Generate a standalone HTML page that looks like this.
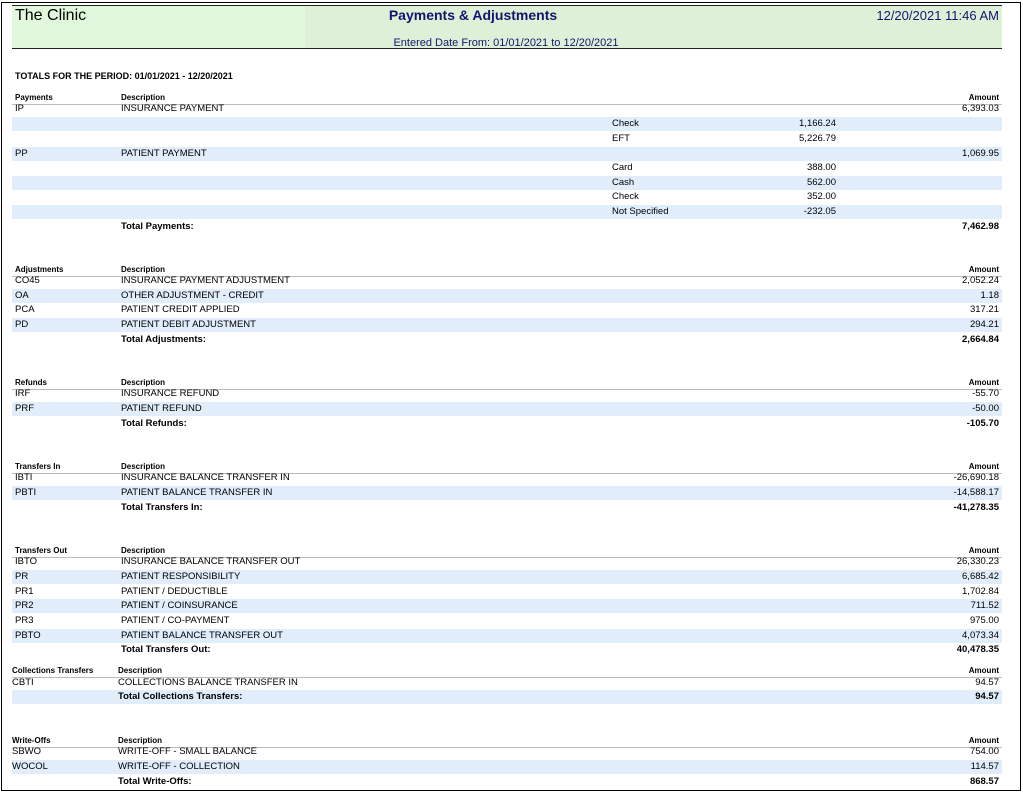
<!DOCTYPE html>
<html><head><meta charset="utf-8"><style>
*{margin:0;padding:0;box-sizing:border-box}
body{width:1023px;height:792px;background:#fff;font-family:"Liberation Sans",Arial,sans-serif;color:#000;position:relative;overflow:hidden}
.frame{position:absolute;left:1px;top:2px;width:1020px;height:789px;border:1px solid #000}
.hd{position:absolute;left:12px;top:5px;width:990px;height:44px;background:#dff0d8;border-top:1px solid #222;border-bottom:1px solid #222}
.hdl{position:absolute;left:0;top:0;width:293px;height:42px;background:#e2f8dc}
.r{position:absolute;left:12px;width:990px;height:14px;font-size:9.5px;line-height:14px;white-space:nowrap}
.b{background:#e1edfb}
.r span{position:absolute;top:0}
.c{left:3px}.d{left:109px}.s{left:600px}
.sa{right:166px;text-align:right}.a{right:3px;text-align:right}
.h{font-size:8px;font-weight:bold;border-bottom:1px solid #bbb}
.t{font-weight:bold}
.cc .c{left:0}.cc .d{left:106px}
</style></head><body>
<div class="frame"></div>
<div class="hd"><div class="hdl"></div></div>
<div style="position:absolute;left:15px;top:7px;font-size:16px">The Clinic</div>
<div style="position:absolute;left:0;width:946px;text-align:center;top:7px;font-size:14px;font-weight:bold;color:#14146e">Payments &amp; Adjustments</div>
<div style="position:absolute;left:0;width:1012px;text-align:center;top:37px;font-size:11px;color:#14146e">Entered Date From: 01/01/2021 to 12/20/2021</div>
<div style="position:absolute;right:24px;top:8px;font-size:13px;color:#14146e">12/20/2021 11:46 AM</div>
<div style="position:absolute;left:15px;top:71px;font-size:9px;font-weight:bold">TOTALS FOR THE PERIOD: 01/01/2021 - 12/20/2021</div>

<div class="r h" style="top:91px"><span class="c">Payments</span><span class="d">Description</span><span class="a">Amount</span></div>
<div class="r" style="top:102px"><span class="c">IP</span><span class="d">INSURANCE PAYMENT</span><span class="a">6,393.03</span></div>
<div class="r b" style="top:117px"><span class="s">Check</span><span class="sa">1,166.24</span></div>
<div class="r" style="top:132px"><span class="s">EFT</span><span class="sa">5,226.79</span></div>
<div class="r b" style="top:147px"><span class="c">PP</span><span class="d">PATIENT PAYMENT</span><span class="a">1,069.95</span></div>
<div class="r" style="top:161px"><span class="s">Card</span><span class="sa">388.00</span></div>
<div class="r b" style="top:176px"><span class="s">Cash</span><span class="sa">562.00</span></div>
<div class="r" style="top:190px"><span class="s">Check</span><span class="sa">352.00</span></div>
<div class="r b" style="top:205px"><span class="s">Not Specified</span><span class="sa">-232.05</span></div>
<div class="r t" style="top:220px"><span class="d">Total Payments:</span><span class="a">7,462.98</span></div>

<div class="r h" style="top:263px"><span class="c">Adjustments</span><span class="d">Description</span><span class="a">Amount</span></div>
<div class="r" style="top:274px"><span class="c">CO45</span><span class="d">INSURANCE PAYMENT ADJUSTMENT</span><span class="a">2,052.24</span></div>
<div class="r b" style="top:289px"><span class="c">OA</span><span class="d">OTHER ADJUSTMENT - CREDIT</span><span class="a">1.18</span></div>
<div class="r" style="top:303px"><span class="c">PCA</span><span class="d">PATIENT CREDIT APPLIED</span><span class="a">317.21</span></div>
<div class="r b" style="top:318px"><span class="c">PD</span><span class="d">PATIENT DEBIT ADJUSTMENT</span><span class="a">294.21</span></div>
<div class="r t" style="top:333px"><span class="d">Total Adjustments:</span><span class="a">2,664.84</span></div>

<div class="r h" style="top:376px"><span class="c">Refunds</span><span class="d">Description</span><span class="a">Amount</span></div>
<div class="r" style="top:387px"><span class="c">IRF</span><span class="d">INSURANCE REFUND</span><span class="a">-55.70</span></div>
<div class="r b" style="top:402px"><span class="c">PRF</span><span class="d">PATIENT REFUND</span><span class="a">-50.00</span></div>
<div class="r t" style="top:417px"><span class="d">Total Refunds:</span><span class="a">-105.70</span></div>

<div class="r h" style="top:460px"><span class="c">Transfers In</span><span class="d">Description</span><span class="a">Amount</span></div>
<div class="r" style="top:471px"><span class="c">IBTI</span><span class="d">INSURANCE BALANCE TRANSFER IN</span><span class="a">-26,690.18</span></div>
<div class="r b" style="top:486px"><span class="c">PBTI</span><span class="d">PATIENT BALANCE TRANSFER IN</span><span class="a">-14,588.17</span></div>
<div class="r t" style="top:501px"><span class="d">Total Transfers In:</span><span class="a">-41,278.35</span></div>

<div class="r h" style="top:544px"><span class="c">Transfers Out</span><span class="d">Description</span><span class="a">Amount</span></div>
<div class="r" style="top:555px"><span class="c">IBTO</span><span class="d">INSURANCE BALANCE TRANSFER OUT</span><span class="a">26,330.23</span></div>
<div class="r b" style="top:570px"><span class="c">PR</span><span class="d">PATIENT RESPONSIBILITY</span><span class="a">6,685.42</span></div>
<div class="r" style="top:585px"><span class="c">PR1</span><span class="d">PATIENT / DEDUCTIBLE</span><span class="a">1,702.84</span></div>
<div class="r b" style="top:599px"><span class="c">PR2</span><span class="d">PATIENT / COINSURANCE</span><span class="a">711.52</span></div>
<div class="r" style="top:614px"><span class="c">PR3</span><span class="d">PATIENT / CO-PAYMENT</span><span class="a">975.00</span></div>
<div class="r b" style="top:629px"><span class="c">PBTO</span><span class="d">PATIENT BALANCE TRANSFER OUT</span><span class="a">4,073.34</span></div>
<div class="r t" style="top:643px"><span class="d">Total Transfers Out:</span><span class="a">40,478.35</span></div>

<div class="r h cc" style="top:664px"><span class="c">Collections Transfers</span><span class="d">Description</span><span class="a">Amount</span></div>
<div class="r cc" style="top:676px"><span class="c">CBTI</span><span class="d">COLLECTIONS BALANCE TRANSFER IN</span><span class="a">94.57</span></div>
<div class="r b t cc" style="top:690px"><span class="d">Total Collections Transfers:</span><span class="a">94.57</span></div>

<div class="r h cc" style="top:734px"><span class="c">Write-Offs</span><span class="d">Description</span><span class="a">Amount</span></div>
<div class="r cc" style="top:745px"><span class="c">SBWO</span><span class="d">WRITE-OFF - SMALL BALANCE</span><span class="a">754.00</span></div>
<div class="r b cc" style="top:760px"><span class="c">WOCOL</span><span class="d">WRITE-OFF - COLLECTION</span><span class="a">114.57</span></div>
<div class="r t cc" style="top:775px"><span class="d">Total Write-Offs:</span><span class="a">868.57</span></div>
</body></html>
